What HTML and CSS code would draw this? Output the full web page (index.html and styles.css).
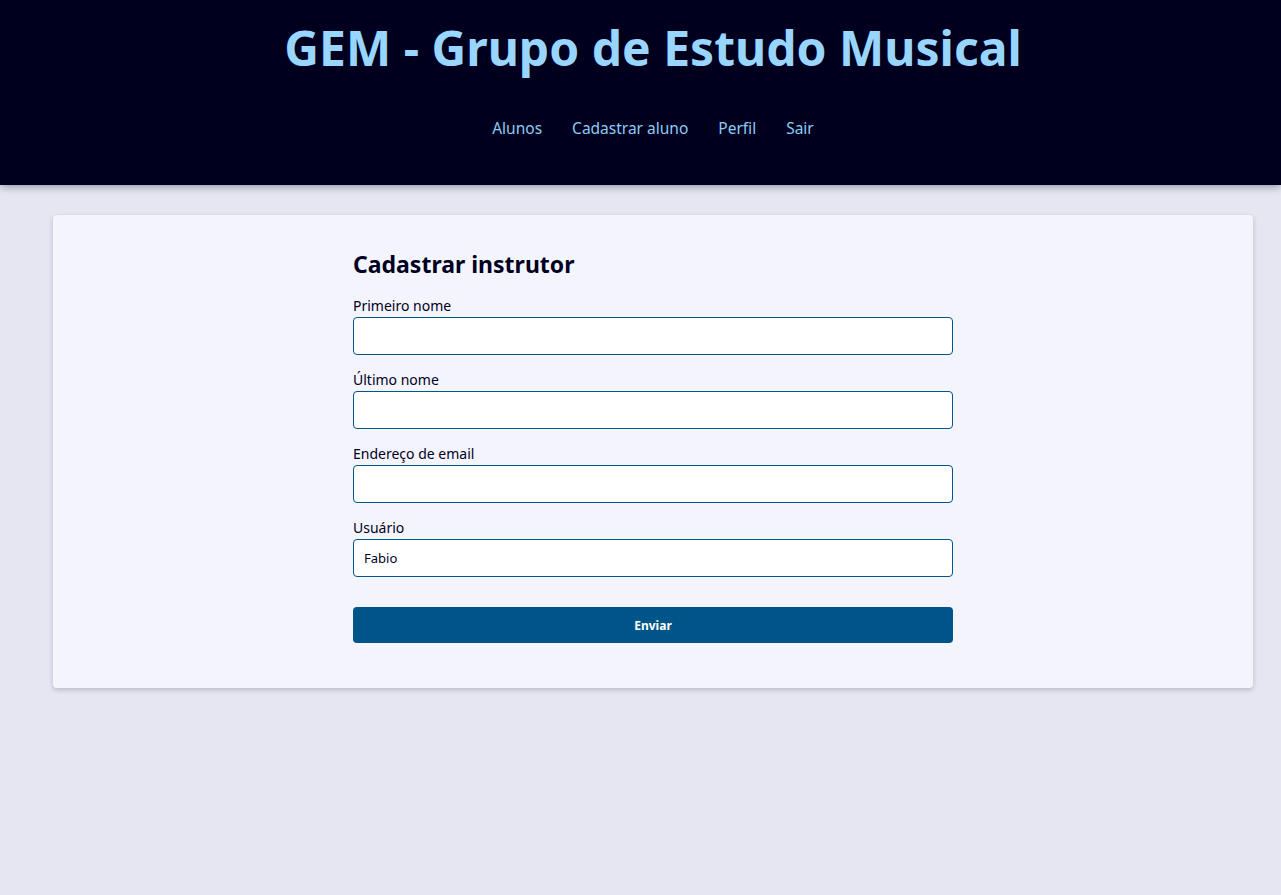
FILE: index.html
```html
<!DOCTYPE html>
<html lang="pt">
<head>
<meta charset="utf-8">
<title>GEM</title>
<link rel="stylesheet" href="styles.css">
</head>
<body>
<header class="site-header">
  <h1 class="site-title">GEM - Grupo de Estudo Musical</h1>
  <nav class="site-nav">
    <a href="#">Alunos</a>
    <a href="#">Cadastrar aluno</a>
    <a href="#">Perfil</a>
    <a href="#">Sair</a>
  </nav>
</header>
<main class="main">
  <section class="card">
    <form class="form">
      <h2 class="form-title">Cadastrar instrutor</h2>
      <div class="field">
        <label>Primeiro nome</label>
        <input type="text">
      </div>
      <div class="field">
        <label>Último nome</label>
        <input type="text">
      </div>
      <div class="field">
        <label>Endereço de email</label>
        <input type="text">
      </div>
      <div class="field">
        <label>Usuário</label>
        <input type="text" value="Fabio">
      </div>
      <button type="button" class="submit">Enviar</button>
    </form>
  </section>
</main>
</body>
</html>
```
FILE: styles.css
```css
* { box-sizing: border-box; }
html, body { margin: 0; padding: 0; }
body {
  background: #e6e6f2;
  font-family: "Noto Sans", "Open Sans", sans-serif;
  color: #00001e;
  min-height: 895px;
}
.site-header {
  background: #00001e;
  height: 185px;
  padding: 0 28px 0 53px;
  display: flex;
  flex-direction: column;
  align-items: center;
  box-shadow: 0 2px 8px rgba(0,0,30,0.35);
  position: relative;
}
.site-title {
  margin: 17px 0 0;
  font-size: 48px;
  line-height: 62px;
  font-weight: 700;
  color: #99d6ff;
}
.site-nav {
  margin-top: 38px;
  display: flex;
  gap: 30px;
}
.site-nav a {
  color: #8ecbf5;
  text-decoration: none;
  font-size: 15.5px;
  line-height: 22px;
}
.main {
  padding: 30px 28px 0 53px;
}
.card {
  background: #f4f4fd;
  border-radius: 4px;
  box-shadow: 0 2px 5px rgba(0,0,40,0.2);
  padding: 35px 0 45px;
  display: flex;
  justify-content: center;
}
.form {
  width: 600px;
  display: flex;
  flex-direction: column;
}
.form-title {
  margin: 0 0 19px;
  font-size: 23px;
  line-height: 28px;
  font-weight: 700;
  color: #00001e;
}
.field {
  display: flex;
  flex-direction: column;
  gap: 2px;
  margin-bottom: 16px;
}
.field label {
  font-size: 14px;
  line-height: 18px;
  color: #00001e;
}
.field input {
  height: 38px;
  border: 1px solid #00558a;
  border-radius: 4px;
  background: #fff;
  padding: 0 10px;
  font-family: inherit;
  font-size: 13px;
  color: #00001e;
}
.submit {
  margin-top: 14px;
  height: 36px;
  border: none;
  border-radius: 4px;
  background: #005588;
  color: #fff;
  font-family: inherit;
  font-size: 12px;
  font-weight: 700;
}
```
